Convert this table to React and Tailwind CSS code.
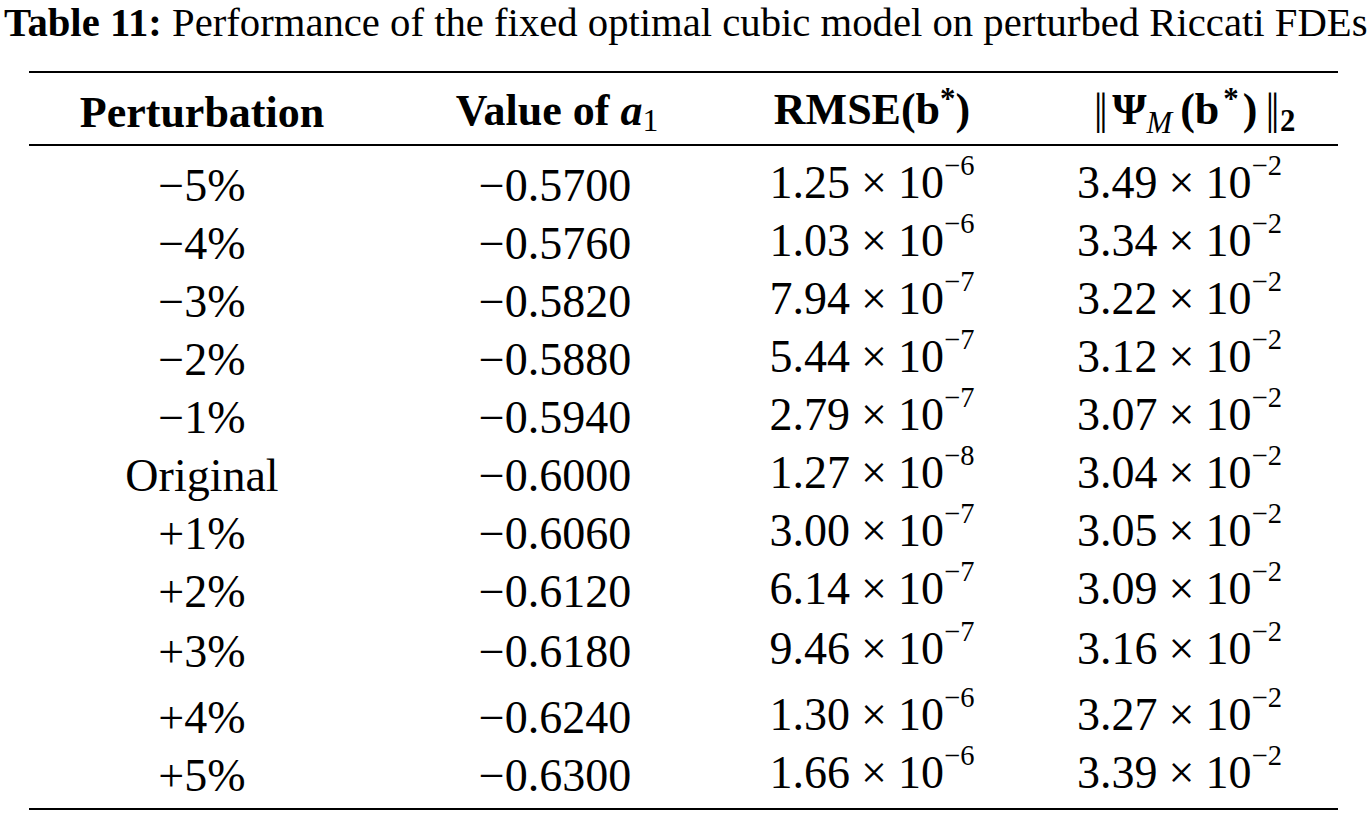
import React from 'react';

const rows = [
  { p: '−5%', a: '−0.5700', r: ['1.25', '−6'], n: ['3.49', '−2'], h: 'h-[58px]' },
  { p: '−4%', a: '−0.5760', r: ['1.03', '−6'], n: ['3.34', '−2'], h: 'h-[58px]' },
  { p: '−3%', a: '−0.5820', r: ['7.94', '−7'], n: ['3.22', '−2'], h: 'h-[58px]' },
  { p: '−2%', a: '−0.5880', r: ['5.44', '−7'], n: ['3.12', '−2'], h: 'h-[58px]' },
  { p: '−1%', a: '−0.5940', r: ['2.79', '−7'], n: ['3.07', '−2'], h: 'h-[58px]' },
  { p: 'Original', a: '−0.6000', r: ['1.27', '−8'], n: ['3.04', '−2'], h: 'h-[58px]' },
  { p: '+1%', a: '−0.6060', r: ['3.00', '−7'], n: ['3.05', '−2'], h: 'h-[58px]' },
  { p: '+2%', a: '−0.6120', r: ['6.14', '−7'], n: ['3.09', '−2'], h: 'h-[58px]' },
  { p: '+3%', a: '−0.6180', r: ['9.46', '−7'], n: ['3.16', '−2'], h: 'h-[68px]' },
  { p: '+4%', a: '−0.6240', r: ['1.30', '−6'], n: ['3.27', '−2'], h: 'h-[58px]' },
  { p: '+5%', a: '−0.6300', r: ['1.66', '−6'], n: ['3.39', '−2'], h: 'h-[58px]' },
];

// mantissa × 10^exp
const Sci = ({ v }) => (
  <span className="whitespace-nowrap">
    {v[0]}
    <span className="mx-[0.24em]">×</span>
    10
    <span className="relative -top-[0.8em] text-[0.62em]">{v[1]}</span>
  </span>
);

const cols = 'grid grid-cols-[346px_360px_274px_329px] items-center text-center';

export default function App() {
  return (
    <div className="w-[1367px] h-[816px] bg-white text-black font-['Liberation_Serif',serif] overflow-hidden">
      {/* Caption */}
      <div className="pl-[4px] text-[40.7px] leading-[46px] whitespace-nowrap">
        <span className="font-bold">Table 11:</span> Performance of the fixed optimal cubic model on perturbed Riccati FDEs
      </div>

      {/* Table */}
      <div className="ml-[29px] w-[1309px] mt-[25px] border-t-2 border-b-2 border-black">
        <div className={`${cols} h-[73px] border-b-2 border-black text-[44px] font-bold leading-[73px]`}>
          <div>Perturbation</div>
          <div className="pl-[4px]">
            Value of <span className="italic">a</span>
            <span className="relative top-[0.22em] text-[0.72em] font-normal">1</span>
          </div>
          <div>
            RMSE(b<span className="relative -top-[0.5em] text-[0.7em]">*</span>)
          </div>
          <div className="pl-[42px] whitespace-nowrap">
            <span className="font-normal tracking-[-0.08em] mr-[8px]">||</span>Ψ
            <span className="relative top-[0.3em] text-[0.7em] font-normal italic">M</span>
            <span className="ml-[8px]">(</span>b
            <span className="relative -top-[0.5em] text-[0.7em] mx-[4px]">*</span>
            <span className="mr-[8px]">)</span>
            <span className="font-normal tracking-[-0.08em]">||</span>
            <span className="relative top-[0.22em] text-[0.7em] ml-[4px]">2</span>
          </div>
        </div>

        <div className="pt-[8px] pb-[6px] text-[46px]">
          {rows.map((r) => (
            <div key={r.p} className={`${cols} ${r.h} leading-[58px]`}>
              <div>{r.p}</div>
              <div>{r.a}</div>
              <div>
                <Sci v={r.r} />
              </div>
              <div className="pl-[12px]">
                <Sci v={r.n} />
              </div>
            </div>
          ))}
        </div>
      </div>
    </div>
  );
}
